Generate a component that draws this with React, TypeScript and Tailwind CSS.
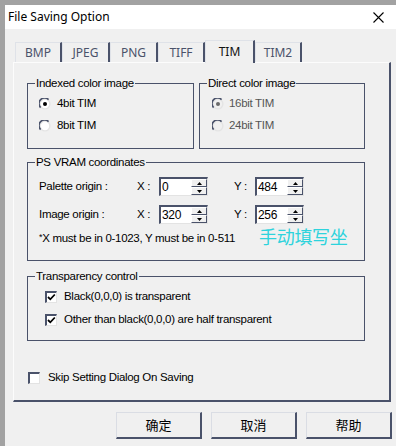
import React from "react";

const DARK = "#4a526a";
const UI = { fontFamily: '"Liberation Sans", Arial, sans-serif', letterSpacing: "-0.3px" };
const CJK = { fontFamily: '"Noto Sans CJK SC", "Noto Sans", sans-serif' };

function Radio({ on, disabled }: { on?: boolean; disabled?: boolean }) {
  return (
    <svg width="12" height="12" viewBox="0 0 12 12" className="shrink-0">
      <circle cx="6" cy="6" r="5.6" fill="#e4e4e4" />
      <circle cx="6" cy="6" r="4.2" fill={disabled ? "#f0f0f0" : "#ffffff"} />
      <path d="M1.6 9.6 A5.2 5.2 0 0 1 9.6 1.6" stroke={DARK} strokeWidth="1.6" fill="none" />
      {on && <circle cx="6" cy="6" r="2" fill={disabled ? "#6a6a6a" : "#000"} />}
    </svg>
  );
}

function Check({ on }: { on?: boolean }) {
  return (
    <div className="w-[12px] h-[12px] shrink-0 border-t-2 border-l-2 border-[#4a526a] border-r border-b border-r-[#e3e3e3] border-b-[#e3e3e3] bg-white flex items-center justify-center">
      {on && (
        <svg width="9" height="9" viewBox="0 0 9 9">
          <path d="M1 4 L3.3 6.3 L7.8 1.5" stroke="#000" strokeWidth="1.8" fill="none" />
        </svg>
      )}
    </div>
  );
}

function Spin({ value }: { value: string }) {
  return (
    <div className="flex h-[19px] border-t-2 border-l-2 border-[#4a526a] border-r border-b border-r-[#e3e3e3] border-b-[#e3e3e3] bg-white">
      <div className="w-[30px] pl-[1px] text-[12px] leading-[16px] text-black" style={UI}>
        {value}
      </div>
      <div className="w-[16px] flex flex-col bg-[#f0f0f0]">
        <div className="h-[8px] border-t border-l border-white border-r border-b border-r-[#4a526a] border-b-[#4a526a] flex items-center justify-center">
          <svg width="5" height="3" viewBox="0 0 5 3"><path d="M2.5 0 L5 3 L0 3 Z" fill="#000" /></svg>
        </div>
        <div className="h-[8px] border-t border-l border-white border-r border-b border-r-[#4a526a] border-b-[#4a526a] flex items-center justify-center">
          <svg width="5" height="3" viewBox="0 0 5 3"><path d="M0 0 L5 0 L2.5 3 Z" fill="#000" /></svg>
        </div>
      </div>
    </div>
  );
}

function Group({ label, className, children }: { label: string; className: string; children: React.ReactNode }) {
  return (
    <fieldset className={`border border-[#4a526a] ${className}`}>
      <legend className="ml-[7px] px-[1px] text-[11.5px] leading-[14px] text-black" style={UI}>
        {label}
      </legend>
      {children}
    </fieldset>
  );
}

function Tab({ label, selected, w }: { label: string; selected?: boolean; w: string }) {
  return (
    <div
      className={
        selected
          ? `relative z-10 -mb-px h-[23px] ${w} bg-[#f0f0f0] border-t border-l border-[#dfe2e8] border-r-2 border-r-[#4a526a] flex items-center justify-center text-[12px] text-[#111]`
          : `h-[20px] ${w} bg-[#f0f0f0] border-t border-l border-[#dfe2e8] border-r-2 border-r-[#4a526a] flex items-center justify-center text-[12px] text-[#4a526a]`
      }
      style={{ fontFamily: '"Noto Sans", "Open Sans", sans-serif' }}
    >
      {label}
    </div>
  );
}

function Btn({ label }: { label: string }) {
  return (
    <div
      className="w-[86px] h-[27px] border-t border-l border-[#dadde4] border-r-2 border-b-2 border-r-[#4a526a] border-b-[#4a526a] flex items-center justify-center text-[13px] text-black"
      style={CJK}
    >
      {label}
    </div>
  );
}

export default function App() {
  return (
    <div className="w-[396px] h-[446px] bg-[#a2a2a2] pt-[5px] pl-[5px] overflow-hidden">
      <div className="w-[391px] h-[441px] bg-[#f0f0f0] flex flex-col">
        {/* title bar */}
        <div className="h-[24px] bg-white flex items-center justify-between pl-[3px] pr-[12px] shrink-0">
          <span className="text-[12px] text-black" style={{ fontFamily: '"Noto Sans", sans-serif' }}>
            File Saving Option
          </span>
          <svg width="11" height="11" viewBox="0 0 11 11">
            <path d="M0.5 0.5 L10.5 10.5 M10.5 0.5 L0.5 10.5" stroke="#000" strokeWidth="1.1" />
          </svg>
        </div>

        {/* tabs */}
        <div className="mt-[11px] ml-[10px] flex items-end h-[22px]">
          <Tab label="BMP" w="w-[47px]" />
          <Tab label="JPEG" w="w-[48px]" />
          <Tab label="PNG" w="w-[48px]" />
          <Tab label="TIFF" w="w-[47px]" />
          <Tab label="TIM" w="w-[50px]" selected />
          <Tab label="TIM2" w="w-[47px]" />
        </div>

        {/* panel */}
        <div className="ml-[8px] w-[378px] h-[340px] border-t border-l border-[#fcfcfc] border-r-2 border-b-2 border-r-[#4a526a] border-b-[#4a526a] pt-[13px] pl-[13px] flex flex-col">
          <div className="flex gap-[5px]">
            <Group label="Indexed color image" className="w-[167px] h-[73px]">
              <div className="pt-[3px] pl-[11px] flex flex-col text-[11.5px] text-black" style={UI}>
                <div className="h-[22px] flex items-center gap-[6px]"><Radio on />4bit TIM</div>
                <div className="h-[22px] flex items-center gap-[6px]"><Radio />8bit TIM</div>
              </div>
            </Group>
            <Group label="Direct color image" className="w-[166px] h-[73px]">
              <div className="pt-[3px] pl-[12px] flex flex-col text-[11.5px] text-[#555]" style={UI}>
                <div className="h-[22px] flex items-center gap-[5px]"><Radio on disabled />16bit TIM</div>
                <div className="h-[22px] flex items-center gap-[5px]"><Radio disabled />24bit TIM</div>
              </div>
            </Group>
          </div>

          <Group label="PS VRAM coordinates" className="mt-[6px] w-[338px] h-[106px]">
            <div className="pt-[8px] pl-[11px] flex flex-col text-[11.5px] text-black" style={UI}>
              <div className="flex items-center h-[19px]">
                <span className="w-[98px]">Palette origin :</span>
                <span className="w-[22px]">X :</span>
                <Spin value="0" />
                <span className="ml-[26px] w-[21px]">Y :</span>
                <Spin value="484" />
              </div>
              <div className="flex items-center h-[19px] mt-[9px]">
                <span className="w-[98px]">Image origin :</span>
                <span className="w-[22px]">X :</span>
                <Spin value="320" />
                <span className="ml-[26px] w-[21px]">Y :</span>
                <Spin value="256" />
              </div>
              <div className="flex items-center h-[18px] mt-[6px]">
                <span className="w-[208px] whitespace-nowrap">
                  <span className="text-[9px] relative -top-[2px]">*</span>X must be in 0-1023, Y must be in 0-511
                </span>
                <span className="ml-[12px] -mt-[6px] text-[18px] leading-[20px] text-[#2dd3dc]" style={CJK}>
                  手动填写坐
                </span>
              </div>
            </div>
          </Group>

          <Group label="Transparency control" className="mt-[8px] w-[338px] h-[72px]">
            <div className="pt-[3px] pl-[17px] flex flex-col text-[11.5px] text-black" style={UI}>
              <div className="h-[22px] flex items-center gap-[7px]"><Check on />Black(0,0,0) is transparent</div>
              <div className="h-[23px] flex items-center gap-[7px]"><Check on />Other than black(0,0,0) are half transparent</div>
            </div>
          </Group>

          <div className="mt-[29px] h-[16px] flex items-center gap-[8px] text-[11.5px] text-black pl-[1px]" style={UI}>
            <Check />
            Skip Setting Dialog On Saving
          </div>
        </div>

        {/* buttons */}
        <div className="mt-[10px] flex justify-end gap-[9px] pr-[4px]">
          <Btn label="确定" />
          <Btn label="取消" />
          <Btn label="帮助" />
        </div>
      </div>
    </div>
  );
}
